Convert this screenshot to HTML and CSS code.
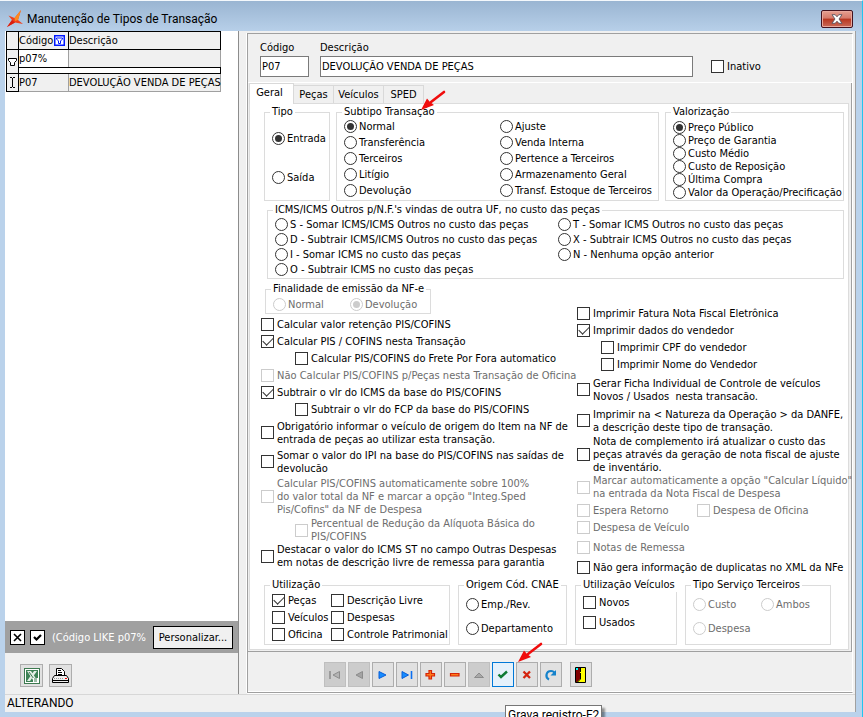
FILE: index.html
```html
<!DOCTYPE html>
<html lang="pt-BR">
<head>
<meta charset="utf-8">
<title>Manutenção de Tipos de Transação</title>
<link rel="stylesheet" href="styles.css">
</head>
<body>
<header class="titlebar">
  <svg class="logo" width="18" height="18" viewBox="0 0 18 18"><path d="M15 0 8.500 8 2.500 5.500 6 10 1 17 9 12.500 17 14 12 10Z" fill="#f0401c"/><path d="M15 0 8.500 8 9 11 12 10Z" fill="#ff8a1c"/><path d="M1 17 9 12.500 6 10Z" fill="#d81e10"/></svg>
  <h1>Manutenção de Tipos de Transação</h1>
  <button class="close" aria-label="Fechar"><svg width="12" height="10" viewBox="0 0 12 10"><path d="M1 .7h3.200L6 2.800 7.800.7H11L8 5l3 4.300H7.800L6 7.200 4.200 9.300H1L4 5Z" fill="#fff" stroke="#5b5560" stroke-width=".9"/></svg></button>
</header>
<div class="client">
  <main class="main">
    <aside class="side">
      <div class="list">
        <table class="grid">
          <thead><tr><th class="mark"></th><th class="code"><span class="head">Código<svg width="11" height="11" viewBox="0 0 11 11"><rect x=".75" y=".75" width="9.500" height="9.500" fill="#fff" stroke="#0018ff" stroke-width="1.500"/><path d="M2.500 3h6v1L6.500 6v2.500h-2V6L2.500 4Z" fill="none" stroke="#0018ff"/></svg></span></th><th class="desc">Descrição</th></tr></thead>
          <tbody>
            <tr class="filter"><td class="mark" rowspan="2"><svg width="9" height="10" viewBox="0 0 9 10"><path d="M.5 1.500h8v2L6.500 5.500v3h-4v-3L.5 3.500Z" fill="#fff" stroke="#000"/></svg></td><td class="code"><input aria-label="Filtro de código" value="p07%"></td><td class="desc"></td></tr>
            <tr class="split"><td colspan="2"></td></tr>
            <tr class="data"><td class="mark"><svg width="7" height="11" viewBox="0 0 7 11"><path d="M1 .5h2M4 .5h2M3.500 1v9M1 10.500h2M4 10.500h2" stroke="#000" fill="none"/></svg></td><td class="code">P07</td><td class="desc">DEVOLUÇÃO VENDA DE PEÇAS</td></tr>
          </tbody>
        </table>
      </div>
      <div class="filterbar">
        <button class="tiny" aria-label="Limpar filtro"><svg width="9" height="9" viewBox="0 0 9 9"><path d="M1 1l7 7M8 1 1 8" stroke="#000" stroke-width="1.600"/></svg></button>
        <button class="tiny" aria-label="Ativar filtro"><svg width="9" height="9" viewBox="0 0 9 9"><path d="M1 4l2.500 2.500L8 2" fill="none" stroke="#000" stroke-width="2.200"/></svg></button>
        <span class="expr">(Código LIKE p07%</span>
        <button class="custom">Personalizar...</button>
      </div>
      <div class="exports">
        <button class="sq" aria-label="Excel"><svg width="16" height="16" viewBox="0 0 16 16"><rect x=".5" y=".5" width="15" height="15" fill="#fff" stroke="#3d7a50"/><rect x="2" y="2" width="12" height="12" fill="#3d8255"/><path d="M3 3h4l6 9H9ZM10 3h3L6 13H3Z" fill="#e4eee6"/><path d="M5 4l5 7" stroke="#3d7a50"/><path d="M9 10h5v4H9Z" fill="#fff"/><path d="M10 11h3M10 13h3" stroke="#3d7a50"/></svg></button>
        <button class="sq" aria-label="Imprimir"><svg width="17" height="17" viewBox="0 0 17 17"><path d="M4.500 8V1.500h5l3 3V8" fill="#fff" stroke="#000"/><path d="M6 3.500h3M6 5.500h4M6 7.500h4" stroke="#000"/><path d="M2.500 8.500h12l2 3v4H.5v-4Z" fill="#eee" stroke="#000"/><path d="M1 13.500h15" stroke="#000"/><path d="M2 11.500h10" stroke="#999" stroke-dasharray="1 1"/><path d="M13 11.500h2" stroke="#e00"/></svg></button>
      </div>
    </aside>
    <section class="editor">
      <div class="record">
        <label class="field f-code">Código<input value="P07"></label>
        <label class="field f-desc">Descrição<input value="DEVOLUÇÃO VENDA DE PEÇAS"></label>
        <label class="opt inactive"><input type="checkbox">Inativo</label>
      </div>
      <div class="pages">
        <nav class="tabs" role="tablist">
          <button role="tab" class="tab active" aria-selected="true">Geral</button><button role="tab" class="tab">Peças</button><button role="tab" class="tab t-wide">Veículos</button><button role="tab" class="tab">SPED</button>
        </nav>
        <svg class="arrow arrow-top" width="26" height="22" viewBox="0 0 26 22"><path d="M24 2 11 12" stroke="#f00d0d" stroke-width="2.600" stroke-linecap="round"/><path d="M1 20 7 8.500 10 12l4 3Z" fill="#f00d0d"/></svg>
        <div class="pane">
          <div class="row-top">
            <fieldset class="p39"><legend>Tipo</legend>
              <label class="opt"><input type="radio" name="tipo" checked>Entrada</label>
              <label class="opt"><input type="radio" name="tipo">Saída</label>
            </fieldset>
            <fieldset class="p16"><legend>Subtipo Transação</legend>
              <div class="cols c-sub">
                <div>
                  <label class="opt"><input type="radio" name="sub" checked>Normal</label>
                  <label class="opt"><input type="radio" name="sub">Transferência</label>
                  <label class="opt"><input type="radio" name="sub">Terceiros</label>
                  <label class="opt"><input type="radio" name="sub">Litígio</label>
                  <label class="opt"><input type="radio" name="sub">Devolução</label>
                </div>
                <div>
                  <label class="opt"><input type="radio" name="sub">Ajuste</label>
                  <label class="opt"><input type="radio" name="sub">Venda Interna</label>
                  <label class="opt"><input type="radio" name="sub">Pertence a Terceiros</label>
                  <label class="opt"><input type="radio" name="sub">Armazenamento Geral</label>
                  <label class="opt"><input type="radio" name="sub">Transf. Estoque de Terceiros</label>
                </div>
              </div>
            </fieldset>
            <fieldset class="p13"><legend>Valorização</legend>
              <label class="opt"><input type="radio" name="val" checked>Preço Público</label>
              <label class="opt"><input type="radio" name="val">Preço de Garantia</label>
              <label class="opt"><input type="radio" name="val">Custo Médio</label>
              <label class="opt"><input type="radio" name="val">Custo de Reposição</label>
              <label class="opt"><input type="radio" name="val">Última Compra</label>
              <label class="opt"><input type="radio" name="val">Valor da Operação/Precificação</label>
            </fieldset>
          </div>
          <fieldset class="p15 icms"><legend>ICMS/ICMS Outros p/N.F.'s vindas de outra UF, no custo das peças</legend>
            <div class="cols c-icms">
              <div>
                <label class="opt"><input type="radio" name="icms">S - Somar ICMS/ICMS Outros no custo das peças</label>
                <label class="opt"><input type="radio" name="icms">D - Subtrair ICMS/ICMS Outros no custo das peças</label>
                <label class="opt"><input type="radio" name="icms">I - Somar ICMS no custo das peças</label>
                <label class="opt"><input type="radio" name="icms">O - Subtrair ICMS no custo das peças</label>
              </div>
              <div>
                <label class="opt"><input type="radio" name="icms">T - Somar ICMS Outros no custo das peças</label>
                <label class="opt"><input type="radio" name="icms">X - Subtrair ICMS Outros no custo das peças</label>
                <label class="opt"><input type="radio" name="icms">N - Nenhuma opção anterior</label>
              </div>
            </div>
          </fieldset>
          <div class="row-mid">
            <div>
              <fieldset class="p16 fin"><legend>Finalidade de emissão da NF-e</legend>
                <div class="cols c-fin">
                  <label class="opt"><input type="radio" name="fin" disabled>Normal</label>
                  <label class="opt"><input type="radio" name="fin" disabled checked>Devolução</label>
                </div>
              </fieldset>
              <div class="checks">
                <label class="opt"><input type="checkbox">Calcular valor retenção PIS/COFINS</label>
                <label class="opt"><input type="checkbox" checked>Calcular PIS / COFINS nesta Transação</label>
                <label class="opt sub-l"><input type="checkbox">Calcular PIS/COFINS do Frete Por Fora automatico</label>
                <label class="opt"><input type="checkbox" disabled>Não Calcular PIS/COFINS p/Peças nesta Transação de Oficina</label>
                <label class="opt"><input type="checkbox" checked>Subtrair o vlr do ICMS da base do PIS/COFINS</label>
                <label class="opt sub-l"><input type="checkbox">Subtrair o vlr do FCP da base do PIS/COFINS</label>
                <label class="opt two"><input type="checkbox">Obrigatório informar o veículo de origem do Item na NF de<br>entrada de peças ao utilizar esta transação.</label>
                <label class="opt two"><input type="checkbox">Somar o valor do IPI na base do PIS/COFINS nas saídas de<br>devolucão</label>
                <label class="opt three"><input type="checkbox" disabled>Calcular PIS/COFINS automaticamente sobre 100%<br>do valor total da NF e marcar a opção "Integ.Sped<br>Pis/Cofins" da NF de Despesa</label>
                <label class="opt sub-l"><input type="checkbox" disabled>Percentual de Redução da Alíquota Básica do<br>PIS/COFINS</label>
                <label class="opt"><input type="checkbox">Destacar o valor do ICMS ST no campo Outras Despesas<br>em notas de descrição livre de remessa para garantia</label>
              </div>
            </div>
            <div class="checks right">
              <label class="opt"><input type="checkbox">Imprimir Fatura Nota Fiscal Eletrônica</label>
              <label class="opt"><input type="checkbox" checked>Imprimir dados do vendedor</label>
              <label class="opt sub-r"><input type="checkbox">Imprimir CPF do vendedor</label>
              <label class="opt sub-r"><input type="checkbox">Imprimir Nome do Vendedor</label>
              <label class="opt tall"><input type="checkbox">Gerar Ficha Individual de Controle de veículos<br>Novos / Usados&nbsp; nesta transacão.</label>
              <label class="opt two"><input type="checkbox">Imprimir na &lt; Natureza da Operação &gt; da DANFE,<br>a descrição deste tipo de transação.</label>
              <label class="opt"><input type="checkbox">Nota de complemento irá atualizar o custo das<br>peças através da geração de nota fiscal de ajuste<br>de inventário.</label>
              <label class="opt"><input type="checkbox" disabled>Marcar automaticamente a opção "Calcular Líquido"<br>na entrada da Nota Fiscal de Despesa</label>
              <div class="cols c-esp">
                <label class="opt"><input type="checkbox" disabled>Espera Retorno</label>
                <label class="opt"><input type="checkbox" disabled>Despesa de Oficina</label>
              </div>
              <label class="opt"><input type="checkbox" disabled>Despesa de Veículo</label>
              <label class="opt loose"><input type="checkbox" disabled>Notas de Remessa</label>
              <label class="opt"><input type="checkbox">Não gera informação de duplicatas no XML da NFe</label>
            </div>
          </div>
          <div class="row-bottom">
            <fieldset class="p17"><legend>Utilização</legend>
              <div class="cols c-use">
                <div>
                  <label class="opt"><input type="checkbox" checked>Peças</label>
                  <label class="opt"><input type="checkbox">Veículos</label>
                  <label class="opt"><input type="checkbox">Oficina</label>
                </div>
                <div>
                  <label class="opt"><input type="checkbox">Descrição Livre</label>
                  <label class="opt"><input type="checkbox">Despesas</label>
                  <label class="opt"><input type="checkbox">Controle Patrimonial</label>
                </div>
              </div>
            </fieldset>
            <fieldset class="p24"><legend>Origem Cód. CNAE</legend>
              <label class="opt"><input type="radio" name="cnae">Emp./Rev.</label>
              <label class="opt"><input type="radio" name="cnae">Departamento</label>
            </fieldset>
            <fieldset class="p20"><legend>Utilização Veículos</legend>
              <label class="opt"><input type="checkbox">Novos</label>
              <label class="opt"><input type="checkbox">Usados</label>
            </fieldset>
            <fieldset class="p24"><legend>Tipo Serviço Terceiros</legend>
              <div class="cols c-srv">
                <label class="opt"><input type="radio" name="srv" disabled>Custo</label>
                <label class="opt"><input type="radio" name="srv" disabled>Ambos</label>
                <label class="opt"><input type="radio" name="srv" disabled>Despesa</label>
              </div>
            </fieldset>
          </div>
        </div>
      </div>
      <div class="toolbar">
        <button disabled aria-label="Primeiro"><svg viewBox="0 0 14 14"><path d="M2 3v8" stroke="#8c8c8c" stroke-width="1.500"/><path d="M11.500 3.500v7L5 7Z" fill="#b4b4b4" stroke="#8c8c8c"/></svg></button>
        <button disabled aria-label="Anterior"><svg viewBox="0 0 14 14"><path d="M10.500 3.500v7L4 7Z" fill="#a4a4a4" stroke="#8c8c8c"/></svg></button>
        <button aria-label="Próximo"><svg viewBox="0 0 14 14"><path d="M3 3.500v7L10 7Z" fill="#178cff" stroke="#0b5fd8"/></svg></button>
        <button aria-label="Último"><svg viewBox="0 0 14 14"><path d="M2 3.500v7L8.500 7Z" fill="#178cff" stroke="#0b5fd8"/><path d="M11.500 3v8" stroke="#0b6ff0" stroke-width="1.600"/></svg></button>
        <button aria-label="Inserir"><svg viewBox="0 0 14 14"><path d="M5 2.500h2.500V5.500h3V8h-3v3H5V8H2V5.500h3Z" fill="#ff7a1a" stroke="#d42408" stroke-width="1.200"/></svg></button>
        <button aria-label="Excluir"><svg viewBox="0 0 14 14"><path d="M2.500 5.500h8.500v2.500H2.500Z" fill="#ff7a1a" stroke="#d42408" stroke-width="1.200"/></svg></button>
        <button disabled aria-label="Editar"><svg viewBox="0 0 14 14"><path d="M2.500 9.500 7 5l4.500 4.500Z" fill="#a8a8a8" stroke="#8c8c8c"/></svg></button>
        <button class="hot" aria-label="Gravar"><svg viewBox="0 0 14 14"><path d="M2.500 6.500 5 9 11 3.500" fill="none" stroke="#0e7a34" stroke-width="2.400"/></svg></button>
        <button aria-label="Cancelar"><svg viewBox="0 0 14 14"><path d="M3.500 3.500l6.500 6.500M10 3.500l-6.500 6.500" stroke="#d4240f" stroke-width="2.300"/></svg></button>
        <button aria-label="Atualizar"><svg viewBox="0 0 14 14"><path d="M5 11.500C.8 9.500 2 3 7 3c2 0 3 .8 3.500 2" fill="none" stroke="#1583cc" stroke-width="2.200"/><path d="M12 2v5.500H6.500Z" fill="#1583cc"/></svg></button>
        <button class="exit" aria-label="Sair"><svg viewBox="0 0 12 18"><path d="M.5 1.500h10v15H.5Z" fill="#ff0" stroke="#000"/><path d="M1 2h4v11l-3 3H1Z" fill="#800000"/><path d="M5.500 2v4M5.500 7v6L2 16.500" stroke="#000" fill="none"/><path d="M1 2h2v2H1Z" fill="#0ff"/></svg></button>
        <svg class="arrow arrow-bottom" width="26" height="22" viewBox="0 0 26 22"><path d="M24 2 11 12" stroke="#f00d0d" stroke-width="2.600" stroke-linecap="round"/><path d="M1 20 7 8.500 10 12l4 3Z" fill="#f00d0d"/></svg>
      </div>
    </section>
  </main>
  <footer class="status">ALTERANDO<span class="tip" role="tooltip">Grava registro-F2</span></footer>
</div>
</body>
</html>
```
FILE: styles.css
```css
* { box-sizing: border-box; }
body {
  margin: 0;
  height: 100vh;
  overflow: hidden;
  display: flex;
  flex-direction: column;
  padding: 0 6px 5px 5px;
  background: linear-gradient(#99b4d1, #bad2eb 34px, #bad2eb);
  border-top: 1px solid #f4f8fc;
  border-right: 1px solid #22c4ee;
  color: #000;
  font: 11px/13px "DejaVu Sans Condensed", "DejaVu Sans", sans-serif;
}
button, input { font: inherit; color: inherit; margin: 0; }
button { padding: 0; display: flex; align-items: center; justify-content: center; }

.titlebar { height: 30px; flex: none; display: flex; align-items: center; padding: 5px 3px 0 1px; }
.titlebar h1 { flex: 1; margin: 0 0 0 3px; font: 12px/16px Roboto, sans-serif; }
.close {
  width: 32px; height: 18px;
  border: 1px solid #43121e; border-radius: 2px;
  box-shadow: inset 0 0 0 1px #e8a79c;
  background: linear-gradient(#e6a090, #d6796a 45%, #b8361f 50%, #c96a58);
}

.client { flex: 1; display: flex; flex-direction: column; background: #f0f0f0; min-height: 0; border-right: 1px solid #a0a0a0; }
.main { flex: 1; display: flex; min-height: 0; }

.side { width: 234px; flex: none; display: flex; flex-direction: column; border-right: 1px solid #8c8c8c; }
.list { flex: 1; background: #fff; padding: 0 1px; }
.grid { border-collapse: collapse; table-layout: fixed; width: 215px; }
.grid th, .grid td { padding: 0; height: 18px; text-align: left; font-weight: normal; border: 1px solid #a0a0a0; background: #f0f0f0; white-space: nowrap; }
.grid th, .grid .mark { border-color: #000; }
.grid .mark { width: 12px; }
.grid .mark svg { display: block; margin: 0 auto; }
.grid .code { width: 50px; }
.grid .filter td { border-bottom-color: #000; }
.grid .filter .code { background: #fff; }
.grid .filter input { display: block; width: 46px; border: 0; padding: 0; background: none; }
.grid .split td { height: 6px; border: 1px solid #000; background: #fff; }
.head { display: flex; align-items: center; gap: 1px; }
.filterbar { height: 32px; flex: none; background: #a0a0a0; display: flex; align-items: center; padding: 0 5px; gap: 5px; }
.tiny { width: 15px; height: 15px; border: 1px solid #000; background: #fff; }
.expr { flex: 1; color: #fff; margin-left: 2px; white-space: nowrap; }
.custom { width: 80px; height: 23px; border: 1px solid #000; background: #f0f0f0; }
.exports { height: 41px; flex: none; display: flex; gap: 6px; padding: 11px 15px; }
.sq { width: 23px; height: 23px; flex: none; border: 1px solid #adadad; background: #e1e1e1; }

.editor {
  flex: 1; display: flex; flex-direction: column; min-width: 0;
  margin: 2px 2px 1px 8px;
  border: 1px solid #a0a0a0; border-right-color: #fff;
  box-shadow: 0 1px #fff, -1px 0 #fff;
}
.record { display: flex; align-items: flex-start; gap: 11px; padding: 7px 12px 5px; border-bottom: 1px solid #fff; }
.field { display: flex; flex-direction: column; gap: 1px; line-height: 14px; }
.field input { width: 100%; height: 21px; border: 1px solid #7a7a7a; background: #fff; padding: 0 1px; }
.f-code { width: 49px; }
.f-desc { width: 373px; }
.inactive { margin: 19px 0 0 7px; }

.pages { position: relative; flex: 1; display: flex; flex-direction: column; border-right: 1px solid #a0a0a0; border-bottom: 1px solid #a0a0a0; padding: 0 2px 1px 1px; }
.tabs { display: flex; align-items: flex-end; height: 20px; }
.tab { width: 40px; height: 18px; border: 1px solid #d9d9d9; border-width: 1px 1px 0 0; background: #f0f0f0; }
.tab.active { width: 45px; height: 21px; border-left-width: 1px; background: #fff; position: relative; margin-bottom: -1px; padding: 0 4px 3px 0; }
.tab.t-wide { width: 50px; }
.pane { flex: 1; background: #fff; border: 1px solid #dcdcdc; padding: 1px 4px 0 14px; }

.opt { display: grid; grid-template-columns: 13px auto; justify-content: start; align-items: center; align-content: center; column-gap: 3px; white-space: nowrap; }
.opt:has(input[type=radio]) { column-gap: 2px; }
.opt input { appearance: none; width: 13px; height: 13px; border: 1px solid #333; background: #fff; display: grid; place-content: center; }
.opt input[type=radio] { border-radius: 50%; }
.opt input[type=radio]:checked::after { content: ""; width: 7px; height: 7px; border-radius: 50%; background: #333; }
.opt input[type=checkbox]:checked::after { content: ""; width: 9px; height: 5px; margin-bottom: 3px; border: solid #333; border-width: 0 0 1px 1px; transform: rotate(-45deg); }
.opt input:disabled { border-color: #ccc; }
.opt input[type=radio]:disabled::after { background: #ccc; }
.opt:has(input:disabled) { color: #6d6d6d; }

fieldset { margin: 0; min-width: 0; padding: 0 0 1px 7px; border: 1px solid #dcdcdc; }
legend { margin-left: -2px; padding: 0 2px; line-height: 14px; white-space: nowrap; }
.cols { display: grid; }
.p13 .opt { height: 13px; }
.p15 .opt { height: 15px; }
.p16 .opt { height: 16px; }
.p17 .opt { height: 17px; }
.p20 .opt { height: 20px; }
.p24 .opt { height: 24px; }
.p39 .opt { height: 39px; }
.c-sub { grid-template-columns: 156px 1fr; margin-top: -1px; }
.c-icms { grid-template-columns: 283px 1fr; }
.c-fin { grid-template-columns: 77px 1fr; }
.c-use { grid-template-columns: 59px 1fr; }
.c-srv { grid-template-columns: 68px 1fr; }
.c-esp { grid-template-columns: 120px 1fr; margin-top: 2px; }

.row-top { display: grid; grid-template-columns: 66px 1fr 179px; gap: 6px; }
.p13 { padding-top: 2px; }
.icms { margin: 2px 0 0 3px; }
.row-mid { display: grid; grid-template-columns: 316px 1fr; margin: 3px 0 0 -3px; }
.fin { width: 166px; margin-left: 4px; }
.checks { display: grid; align-content: start; padding-top: 2px; }
.checks.right { padding-top: 23px; }
.checks .opt { min-height: 17px; }
.opt.sub-l { margin-left: 34px; }
.opt.sub-r { margin-left: 24px; }
.checks .two { min-height: 29px; }
.checks .three { min-height: 41px; }
.checks .tall { min-height: 33px; }
.checks .loose { min-height: 23px; }
.row-bottom { display: grid; grid-template-columns: 186px 109px 102px 146px; gap: 8px; margin-top: 2px; }

.toolbar { position: relative; flex: none; height: 40px; display: flex; gap: 2px; padding: 10px 0 0 76px; border-bottom: 1px solid #fff; }
.toolbar button { width: 22px; height: 25px; border: 1px solid #adadad; background: #e1e1e1; }
.toolbar button svg { width: 14px; height: 14px; }
.toolbar button:disabled { background: #ccc; border-color: #bfbfbf; }
.toolbar .hot { background: #e5f1fb; border-color: #0078d7; }
.toolbar .exit { margin-left: 6px; }
.toolbar .exit svg { height: 18px; }
.arrow { position: absolute; }
.arrow-top { left: 172px; top: 7px; z-index: 2; }
.arrow-bottom { left: 269px; top: -10px; }

.status { position: relative; flex: none; height: 18px; border-top: 1px solid #d7d7d7; padding-left: 2px; font: 12px/17px Roboto, sans-serif; }
.tip { position: absolute; left: 500px; top: 10px; padding: 1px 2px; border: 1px solid #767676; background: #fff; box-shadow: 3px 3px 2px #0006; white-space: nowrap; }
```
